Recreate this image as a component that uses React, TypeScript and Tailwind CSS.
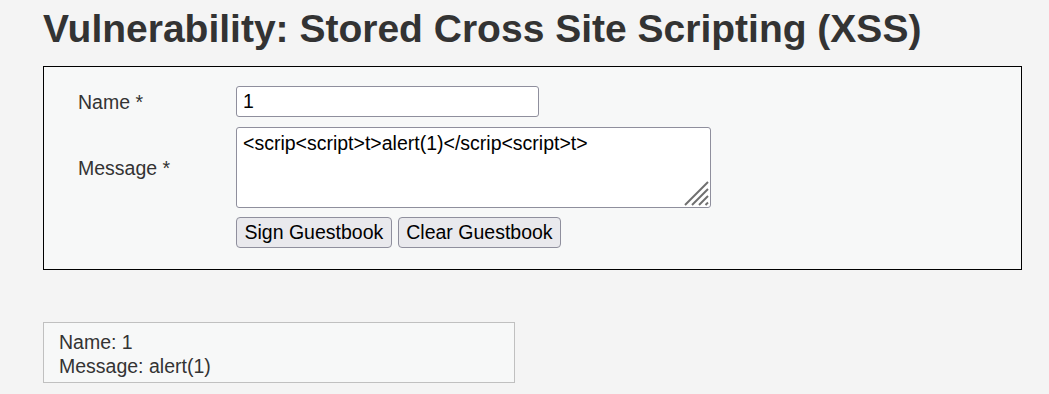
import React from "react";

function ResizeHandle() {
  return (
    <svg
      className="pointer-events-none absolute bottom-[2px] right-[2px]"
      width="25"
      height="25"
      viewBox="0 0 25 25"
    >
      <g stroke="#6f6f6f" strokeWidth="2" strokeLinecap="butt" fill="none">
        <line x1="24" y1="1" x2="1" y2="24" />
        <line x1="24" y1="8" x2="8" y2="24" />
        <line x1="24" y1="15" x2="15" y2="24" />
        <line x1="24" y1="21.5" x2="21.5" y2="24" />
      </g>
    </svg>
  );
}

export default function App() {
  const font = { fontFamily: '"Liberation Sans", Arial, sans-serif' };
  return (
    <div
      className="min-h-[394px] w-[1049px] bg-[#f4f4f4] pl-[43px] text-[#333333]"
      style={font}
    >
      <h1 className="pt-[6px] text-[39px] font-bold leading-[45px] text-[#333333]">
        Vulnerability: Stored Cross Site Scripting (XSS)
      </h1>

      <div className="mt-[15px] w-[979px] border border-black bg-[#f7f8f8] pb-[21px] pl-[34px] pt-[19px]">
        <div className="grid grid-cols-[158px_auto] items-center gap-y-[10px]">
          <label className="pt-[1px] text-[19.5px] leading-[23px] text-[#333333]">Name *</label>
          <div>
            <input
              defaultValue="1"
              className="h-[31px] w-[303px] rounded-[3px] border border-[#8f8f9d] bg-white px-[6px] text-[19.5px] text-black outline-none"
              style={font}
            />
          </div>
          <label className="pt-[1px] text-[19.5px] leading-[23px] text-[#333333]">Message *</label>
          <div className="relative flex w-[475px]">
            <textarea
              defaultValue="<scrip<script>t>alert(1)</scrip<script>t>"
              className="h-[81px] w-[475px] resize-none rounded-[3px] border border-[#8f8f9d] bg-white px-[6px] pt-[4px] text-[19.5px] leading-[23px] text-black outline-none"
              style={font}
            />
            <ResizeHandle />
          </div>
          <div />
          <div className="-mt-[1px] flex gap-[6px]">
            <button className="h-[31px] rounded-[4px] border border-[#8f8f9d] bg-[#e9e9ed] px-[7.5px] text-[19.5px] leading-[23px] text-black">
              Sign Guestbook
            </button>
            <button className="h-[31px] rounded-[4px] border border-[#8f8f9d] bg-[#e9e9ed] px-[7.5px] text-[19.5px] leading-[23px] text-black">
              Clear Guestbook
            </button>
          </div>
        </div>
      </div>

      <div className="mt-[52px] w-[472px] border border-[#c0c0c0] bg-[#f7f8f8] pb-[4px] pl-[15px] pt-[7px] text-[19.5px] leading-[24px] text-[#333333]">
        <div>Name: 1</div>
        <div>Message: alert(1)</div>
      </div>
    </div>
  );
}
